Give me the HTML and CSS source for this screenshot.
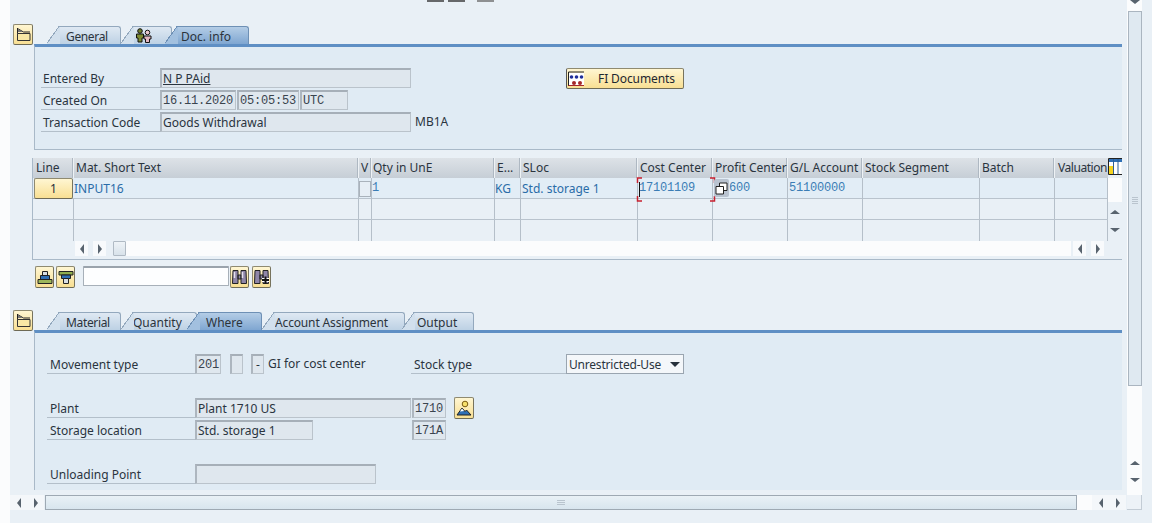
FILE: index.html
```html
<!DOCTYPE html>
<html lang="en">
<head>
<meta charset="utf-8">
<title>Material Document</title>
<link rel="stylesheet" href="styles.css">
</head>
<body>
<div class="window">
  <div class="gutter"></div>
  <main class="main">
    <div class="stubs"><span class="stub"></span><span class="stub"></span><span class="stub stub-gap"></span></div>

    <section class="block block-first">
      <button class="ybtn toggle" aria-label="Toggle">
        <svg width="16" height="15" viewBox="0 0 16 15"><path d="M2.500 6.500H15v7H2.500z" fill="#f8e7a5" stroke="#333"/><path d="M2.500 1v5.500M2.500 1.500l6 3.500H15" fill="none" stroke="#222"/><path d="M3 2l5 3H3z" fill="#777"/></svg>
      </button>
      <div class="tabbed">
        <div class="tabs">
          <div class="tab tab-narrow tab-general">General</div>
          <div class="tab tab-icon">
            <svg width="18" height="15" viewBox="0 0 18 15"><circle cx="5" cy="3" r="2.300" fill="#6f7d2c" stroke="#111"/><path d="M1.500 6h7v4h-1.500v4h-4v-4h-1.500z" fill="#7d8a32" stroke="#111"/><circle cx="12.500" cy="4.500" r="2.300" fill="#e9c7cf" stroke="#111"/><path d="M9 8h7v3h-1.500v3.500h-4v-3.500h-1.500z" fill="#e3b6c2" stroke="#111"/></svg>
          </div>
          <div class="tab tab-active tab-doc">Doc. info</div>
        </div>
        <div class="panel panel-top">
          <div class="row">
            <div class="label label-a">Entered By</div>
            <div class="field w251"><span class="linked">N P PAid</span></div>
            <button class="ybtn fi-btn">
              <svg class="fi-icon" width="18" height="16" viewBox="0 0 18 16"><path d="M1.500 15V1H17" fill="none" stroke="#222"/><path d="M2 2h15v12H2z" fill="#fff"/><circle cx="4.500" cy="6" r="1.800" fill="#1f2f9a"/><circle cx="9.500" cy="6" r="1.800" fill="#1f2f9a"/><circle cx="14.500" cy="6" r="1.800" fill="#1f2f9a"/><circle cx="7" cy="12" r="2" fill="#a5282a"/><circle cx="13" cy="12" r="2" fill="#a5282a"/><path d="M1.500 14.500H17" stroke="#a5282a"/></svg>
              <span>FI Documents</span>
            </button>
          </div>
          <div class="row">
            <div class="label label-a">Created On</div>
            <div class="field mono w76">16.11.2020</div>
            <div class="field mono w62 gap1">05:05:53</div>
            <div class="field mono w48 gap1">UTC</div>
          </div>
          <div class="row">
            <div class="label label-a">Transaction Code</div>
            <div class="field w251">Goods Withdrawal</div>
            <div class="plain after-field">MB1A</div>
          </div>
        </div>
      </div>
    </section>

    <section class="table-wrap">
      <div class="table-body">
        <div class="table-main">
          <div class="trow thead">
            <div class="line-head">Line</div><div>Mat. Short Text</div><div>V</div><div class="qty-head">Qty in UnE</div><div>E...</div><div>SLoc</div><div>Cost Center</div><div>Profit Center</div><div>G/L Account</div><div>Stock Segment</div><div>Batch</div><div class="val-head">Valuation</div>
          </div>
          <div class="trow tdata tdata-on">
            <div class="cell-sel"><button class="ybtn line-btn">1</button></div>
            <div class="inp">INPUT16</div>
            <div class="cell-check"><span class="check"></span></div>
            <div class="num num-flush">1</div>
            <div class="inp">KG</div>
            <div class="inp inp-sloc">Std. storage 1</div>
            <div class="num focus">17101109
              <svg class="brackets" width="80" height="25" viewBox="0 0 80 25"><path d="M6 1H1.500v5M1.500 19v5H6M74 1h4.500v5M78.500 19v5H74" fill="none" stroke="#c8202f" stroke-width="1.500"/><path d="M3.500 5v15" stroke="#111"/></svg>
            </div>
            <div class="num num-shift">600
              <span class="copy"><svg width="13" height="13" viewBox="0 0 13 13"><path d="M4.500 1h7.500v7.500H4.500z" fill="#fff" stroke="#222"/><path d="M1 4.500h7.500V12H1z" fill="#fff" stroke="#222"/></svg></span>
            </div>
            <div class="num">51100000</div>
            <div></div><div></div><div></div>
          </div>
          <div class="trow tdata"><div></div><div></div><div></div><div></div><div></div><div></div><div></div><div></div><div></div><div></div><div></div><div></div></div>
          <div class="trow tdata tdata-last"><div></div><div></div><div></div><div></div><div></div><div></div><div></div><div></div><div></div><div></div><div></div><div></div></div>
        </div>
        <div class="table-side">
          <svg class="cfg" width="14" height="17" viewBox="0 0 14 17"><path d="M.5 .5H14M.5 .5V16.500H14" fill="none" stroke="#222"/><path d="M1 1h13v3H1z" fill="#2f6fb5"/><path d="M1 8h4v8H1z" fill="#f4d21f"/><path d="M1 4h4v4H1z" fill="#fff"/><path d="M5.500 4h8v12h-8z" fill="#fff"/><path d="M5.500 1v15M10 1v15" stroke="#2f5f95"/></svg>
          <div class="side-white"></div>
          <div class="side-arrows">
            <span class="arrow up"></span>
            <span class="arrow down"></span>
          </div>
        </div>
      </div>
      <div class="table-hs">
        <span class="arrow-box small"><span class="arrow left"></span></span>
        <span class="arrow-box small"><span class="arrow right"></span></span>
        <span class="hs-thumb"></span>
        <span class="hs-track"></span>
        <span class="arrow-box small"><span class="arrow left"></span></span>
        <span class="arrow-box small"><span class="arrow right"></span></span>
      </div>
    </section>

    <div class="toolbar">
      <button class="ybtn tool-btn" aria-label="Up">
        <svg width="16" height="15" viewBox="0 0 16 15"><path d="M5.500 1.500h5v4h-5z" fill="#d9dfe4" stroke="#222"/><path d="M3.500 5.500h9v4h-9z" fill="#2f6fb5" stroke="#222"/><path d="M1 9.500h14v4H1z" fill="#9cb65a" stroke="#222"/></svg>
      </button>
      <button class="ybtn tool-btn tool-gap" aria-label="Filter">
        <svg width="16" height="15" viewBox="0 0 16 15"><path d="M1 1.500h14v3.500H1z" fill="#8fae4f" stroke="#222"/><path d="M3.500 5h9v3.500h-9z" fill="#2f6fb5" stroke="#222"/><path d="M5.500 8.500h5v5h-5z" fill="#d9dfe4" stroke="#222"/></svg>
      </button>
      <div class="search"></div>
      <button class="ybtn tool-btn" aria-label="Find">
        <svg width="17" height="16" viewBox="0 0 17 16"><path d="M2 1.500h5v13H1.500zM10 1.500h5l.5 13H10zM7 6h3v4H7z" fill="#8f86a8" stroke="#222"/><path d="M3.500 3v6M11.500 3v6" stroke="#e6e2ef" stroke-width="1.500"/></svg>
      </button>
      <button class="ybtn tool-btn tool-find" aria-label="Find next">
        <svg width="17" height="16" viewBox="0 0 17 16"><path d="M2 1.500h5v13H1.500zM10 1.500h5l.5 13H10zM7 6h3v4H7z" fill="#8f86a8" stroke="#222"/><path d="M9 9h7v4H9z" fill="#fff"/><path d="M12.500 7.500v7M9 11h7" stroke="#111" stroke-width="2"/></svg>
      </button>
    </div>

    <section class="block block-second">
      <button class="ybtn toggle" aria-label="Toggle">
        <svg width="16" height="15" viewBox="0 0 16 15"><path d="M2.500 6.500H15v7H2.500z" fill="#f8e7a5" stroke="#333"/><path d="M2.500 1v5.500M2.500 1.500l6 3.500H15" fill="none" stroke="#222"/><path d="M3 2l5 3H3z" fill="#777"/></svg>
      </button>
      <div class="tabbed">
        <div class="tabs">
          <div class="tab tab-narrow tab-material">Material</div>
          <div class="tab tab-qty">Quantity</div>
          <div class="tab tab-active tab-where">Where</div>
          <div class="tab tab-acct">Account Assignment</div>
          <div class="tab tab-output">Output</div>
        </div>
        <div class="panel panel-bottom">
          <div class="row">
            <div class="label label-b">Movement type</div>
            <div class="field mono w26">201</div>
            <div class="field w13 gap9"></div>
            <div class="field w13 gap8 center">-</div>
            <div class="plain gi">GI for cost center</div>
            <div class="label label-stock">Stock type</div>
            <div class="select"><span>Unrestricted-Use</span><span class="select-caret"></span></div>
          </div>
          <div class="row"></div>
          <div class="row">
            <div class="label label-b">Plant</div>
            <div class="field w216">Plant 1710 US</div>
            <div class="field mono w34 gap1">1710</div>
            <button class="ybtn pic-btn" aria-label="Display">
              <svg width="16" height="16" viewBox="0 0 16 16"><circle cx="9" cy="4" r="2.800" fill="#f6df6a" stroke="#7a5b12"/><path d="M1 15l5-7 3 3.500 1.500-1.500 4.500 5z" fill="#2f6fb5" stroke="#222"/><path d="M4 11.500l2-3 2 2.500z" fill="#fff"/></svg>
            </button>
          </div>
          <div class="row">
            <div class="label label-b">Storage location</div>
            <div class="field w118">Std. storage 1</div>
            <div class="field mono w34 gap99">171A</div>
          </div>
          <div class="row"></div>
          <div class="row">
            <div class="label label-b">Unloading Point</div>
            <div class="field w181"></div>
          </div>
        </div>
      </div>
    </section>
  </main>
  <aside class="vscroll">
    <span class="arrow down vs-top"></span>
    <div class="vs-thumb"><span class="grip grip-v"></span></div>
    <div class="vs-track"></div>
    <span class="arrow up vs-btn"></span>
    <span class="arrow down vs-btn"></span>
  </aside>
  <div class="edge"></div>
  <div class="gutter gutter-low"></div>
  <div class="hscroll">
    <span class="arrow-box wide"><span class="arrow left"></span></span>
    <span class="arrow-box wide"><span class="arrow right"></span></span>
    <div class="h-thumb"><span class="grip grip-h"></span></div>
    <span class="h-track"></span>
    <span class="arrow-box wide"><span class="arrow left"></span></span>
    <span class="arrow-box wide"><span class="arrow right"></span></span>
  </div>
  <div class="corner"></div>
  <div class="edge"></div>
  <div class="gutter"></div>
  <div class="foot"></div>
</div>
</body>
</html>
```

FILE: styles.css
```css
* { box-sizing: border-box; }
html, body { margin: 0; padding: 0; }
body {
  width: 1152px;
  height: 523px;
  overflow: hidden;
  background: #e9f0f6;
  font-family: "Noto Sans", "DejaVu Sans", sans-serif;
  font-size: 12px;
  color: #2a343e;
}
button { font: inherit; color: inherit; padding: 0; }

.window {
  display: grid;
  grid-template-columns: 10px 1117px 15px 10px;
  grid-template-rows: 495px 15px 13px;
  width: 1152px;
  height: 523px;
}
.gutter { background: #fbfcfd; }
.edge { background: #e9f0f6; }
.foot { grid-column: 2 / 5; background: #e9f0f6; }
.main { overflow: hidden; background: #e9f0f6; }

.stubs { display: flex; height: 2px; padding-left: 417px; gap: 4px; }
.stub { width: 17px; background: #66686a; }
.stub-gap { margin-left: 8px; background: #8e9092; }

.block { display: flex; align-items: flex-start; padding-left: 3px; }
.block-first { margin-top: 22px; }
.block-second { margin-top: 22px; }

.ybtn {
  display: inline-flex;
  align-items: center;
  justify-content: center;
  background: linear-gradient(#fff6d2, #f8df93);
  border: 1px solid #8f8a70;
  border-right-color: #77735d;
  border-bottom-color: #6e6a55;
  border-radius: 2px;
}
.toggle { width: 20px; height: 21px; flex: none; margin-right: 1px; }

.tabbed { flex: none; width: 1088px; padding-top: 2px; }
.tabs { display: flex; height: 18px; padding-left: 26px; }
.tab {
  position: relative;
  height: 18px;
  line-height: 19px;
  margin-left: 2px;
  background: linear-gradient(#dfe9f3, #bdd1e4);
  border-top: 1px solid #93a8bd;
  border-right: 1px solid #93a8bd;
  border-top-right-radius: 3px;
  color: #2b333b;
  white-space: nowrap;
}
.tab::before {
  content: "";
  position: absolute;
  top: -1px;
  bottom: 0;
  left: -13px;
  width: 13px;
  background: linear-gradient(to bottom right, transparent calc(50% - 1px), #93a8bd calc(50% - 1px), #93a8bd 50%, #d2e0ed 50%);
}
.tab-active {
  z-index: 1;
  background: linear-gradient(#b4cde6, #7fa6d1);
  border-color: #6e90b5;
}
.tab-active::before {
  background: linear-gradient(to bottom right, transparent calc(50% - 1px), #6e90b5 calc(50% - 1px), #6e90b5 50%, #a2c0df 50%);
}
.tab-narrow { letter-spacing: -.35px; }
.tab-general { margin-left: 0; width: 61px; padding-left: 6px; }
.tab-icon { margin-left: 13px; width: 38px; display: flex; align-items: center; padding-left: 1px; }
.tab-doc { margin-left: 6px; width: 71px; padding-left: 3px; }
.tab-material { margin-left: 0; width: 61px; padding-left: 6px; }
.tab-qty { margin-left: 13px; width: 63px; text-indent: -1px; }
.tab-where { margin-left: 3px; width: 62px; padding-left: 6px; }
.tab-acct { margin-left: 13px; width: 130px; letter-spacing: -.15px; }
.tab-output { margin-left: 10px; width: 59px; padding-left: 2px; }

.panel {
  background: #e0ebf4;
  border-top: 3px solid #5f8fc4;
  border-left: 1px solid #a9b9c8;
}
.panel-top { height: 106px; padding-top: 21px; border-bottom: 1px solid #a9b9c8; }
.panel-bottom { height: 160px; padding-top: 21px; }

.row { display: flex; height: 22px; align-items: flex-start; }
.label {
  flex: none;
  height: 20px;
  line-height: 21px;
  border-bottom: 1px solid #b3bfca;
  white-space: nowrap;
}
.label-a { width: 119px; margin-left: 6px; padding-left: 2px; }
.label-b { width: 148px; margin-left: 12px; padding-left: 3px; }
.label-stock { width: 155px; margin-left: 43px; padding-left: 3px; }

.field {
  flex: none;
  height: 20px;
  line-height: 17px;
  padding-left: 1px;
  background: #dfe7ee;
  border: 1px solid #bac3cb;
  border-top: 2px solid #a6afb8;
  border-left: 2px solid #adb6bf;
  white-space: nowrap;
  overflow: hidden;
}
.mono { font-family: "Liberation Mono", "DejaVu Sans Mono", monospace; font-size: 12px; letter-spacing: -.2px; line-height: 19px; color: #3a444e; }
.center { text-align: center; padding-left: 0; }
.w251 { width: 251px; }
.w216 { width: 216px; }
.w181 { width: 181px; }
.w118 { width: 118px; }
.w76 { width: 76px; }
.w62 { width: 62px; }
.w48 { width: 48px; }
.w34 { width: 34px; }
.w26 { width: 26px; }
.w13 { width: 13px; }
.gap1 { margin-left: 1px; }
.gap8 { margin-left: 8px; }
.gap9 { margin-left: 9px; }
.gap99 { margin-left: 99px; }
.linked { text-decoration: underline; }
.plain { line-height: 20px; white-space: nowrap; }
.after-field { margin-left: 4px; }
.gi { margin-left: 4px; width: 100px; }

.fi-btn {
  width: 118px;
  height: 21px;
  margin-left: 155px;
  justify-content: flex-start;
  color: #1d2730;
  border-left-color: #555;
  letter-spacing: -.1px;
}
.fi-icon { margin-right: 13px; flex: none; }

.select {
  width: 118px;
  height: 20px;
  display: flex;
  align-items: center;
  justify-content: space-between;
  padding: 0 3px 0 2px;
  background: #f4f7fa;
  border: 1px solid #9aa5b0;
  letter-spacing: -.2px;
}
.select-caret {
  width: 0;
  height: 0;
  border-left: 5px solid transparent;
  border-right: 5px solid transparent;
  border-top: 5px solid #26313c;
}
.pic-btn { width: 20px; height: 22px; margin: -1px 0 0 8px; }

.table-wrap {
  width: 1090px;
  height: 102px;
  margin: 8px 0 0 22px;
  border-left: 1px solid #a9b9c8;
  border-bottom: 1px solid #a9b9c8;
}
.table-body { display: flex; height: 83px; }
.table-main { width: 1075px; flex: none; }
.table-side { width: 14px; flex: none; display: flex; flex-direction: column; }
.cfg { display: block; flex: none; }

.trow {
  display: grid;
  grid-template-columns: 41px 285px 13px 123px 26px 117px 75px 75px 75px 117px 75px 53px;
}
.trow > div { border-right: 1px solid #b5bfc9; white-space: nowrap; overflow: hidden; padding-left: 2px; }
.thead { height: 20px; background: linear-gradient(#dde2e7, #c6ced6); line-height: 20px; }
.thead > div { border-right-color: #eef2f5; box-shadow: inset -1px 0 0 #aeb8c2; }
.trow > .line-head { padding-left: 3px; }
.trow > .qty-head { padding-left: 1px; }
.trow > .val-head { padding-left: 3px; letter-spacing: -.45px; border-right: 0; box-shadow: none; }
.tdata { height: 21px; border-bottom: 1px solid #b9c3cd; line-height: 21px; color: #2a6ca8; }
.tdata-on { background: #e2edf6; }
.tdata-last { border-bottom: 0; }
.trow > .cell-sel { padding: 0; border-right: 0; }
.line-btn { width: 39px; height: 21px; margin: 0 0 0 1px; color: #25303b; }
.trow > .cell-check { padding: 0; }
.check { display: block; width: 12px; height: 16px; margin-top: 3px; background: #e6eef5; border: 1px solid #a9b2bb; }
.trow > .inp { padding-left: 0; }
.trow > .inp-sloc { padding-left: 1px; }
.trow > .num { font-family: "Liberation Mono", "DejaVu Sans Mono", monospace; font-size: 12px; letter-spacing: -.2px; line-height: 21px; padding-left: 1px; color: #3b7db5; }
.trow > .num-flush { padding-left: 0; }
.trow > .focus { position: relative; overflow: visible; z-index: 2; }
.brackets { position: absolute; left: -2px; top: -1px; }
.trow > .num-shift { position: relative; overflow: visible; padding-left: 16px; }
.copy {
  position: absolute;
  left: 1px;
  top: 1px;
  z-index: 3;
  width: 15px;
  height: 18px;
  display: flex;
  align-items: center;
  justify-content: center;
  background: #b9c3d0;
  border-radius: 2px;
}

.side-white { height: 24px; margin-top: 3px; background: #fbfcfd; }
.side-arrows { display: flex; flex-direction: column; align-items: center; gap: 14px; padding-top: 8px; }
.arrow { display: block; width: 0; height: 0; border: 4px solid transparent; flex: none; }
.arrow.up { border-top-width: 0; border-bottom: 4px solid #58636e; border-left-width: 5px; border-right-width: 5px; }
.arrow.down { border-bottom-width: 0; border-top: 4px solid #58636e; border-left-width: 5px; border-right-width: 5px; }
.arrow.left { border-left-width: 0; border-right: 4px solid #58636e; border-top-width: 5px; border-bottom-width: 5px; }
.arrow.right { border-right-width: 0; border-left: 4px solid #58636e; border-top-width: 5px; border-bottom-width: 5px; }

.table-hs { display: flex; align-items: stretch; height: 15px; margin-left: 42px; }
.arrow-box { display: flex; align-items: center; justify-content: center; flex: none; background: #f4f7fa; }
.arrow-box.small { width: 13px; background: #f8fafc; }
.arrow-box.small + .arrow-box.small { margin-left: 5px; }
.hs-thumb { width: 13px; margin-left: 7px; background: linear-gradient(#eef3f7, #d8e2ea); border: 1px solid #b0bac4; border-radius: 1px; }
.hs-track { width: 945px; margin-right: 2px; background: #fbfcfd; }

.toolbar { display: flex; height: 22px; margin: 6px 0 0 25px; align-items: flex-start; }
.tool-btn { width: 19px; height: 22px; }
.tool-gap { margin-left: 2px; }
.search {
  width: 146px;
  height: 20px;
  margin: 0 1px 0 8px;
  background: #fdfeff;
  border: 1px solid #a7b0b9;
  border-top: 2px solid #9aa3ac;
  border-radius: 1px;
}
.tool-find { margin-left: 3px; }

.vscroll { display: flex; flex-direction: column; align-items: center; background: #fbfcfd; }
.vs-thumb {
  width: 14px;
  height: 380px;
  margin: 7px 0 0 1px;
  background: #dfe9f1;
  border: 1px solid #aab5c0;
  display: flex;
  align-items: center;
  justify-content: center;
}
.vs-track { height: 75px; flex: none; }
.vs-btn { margin-bottom: 13px; }
.grip { width: 6px; height: 7px; background: repeating-linear-gradient(#b9c4ce 0 1px, transparent 1px 2px); }
.grip-v { margin-top: 4px; }
.grip-h { width: 8px; height: 6px; }

.hscroll { display: flex; align-items: stretch; background: #e9f0f6; }
.arrow-box.wide { width: 17px; }
.h-thumb {
  width: 1032px;
  margin-left: 1px;
  background: linear-gradient(#e9f1f6, #d8e5ee);
  border: 1px solid #9ea9b3;
  display: flex;
  align-items: center;
  justify-content: center;
}
.h-track { width: 15px; background: #fbfcfd; }
.corner { background: #edf2f7; border-right: 1px solid #c3ccd5; border-bottom: 1px solid #c3ccd5; }
```
